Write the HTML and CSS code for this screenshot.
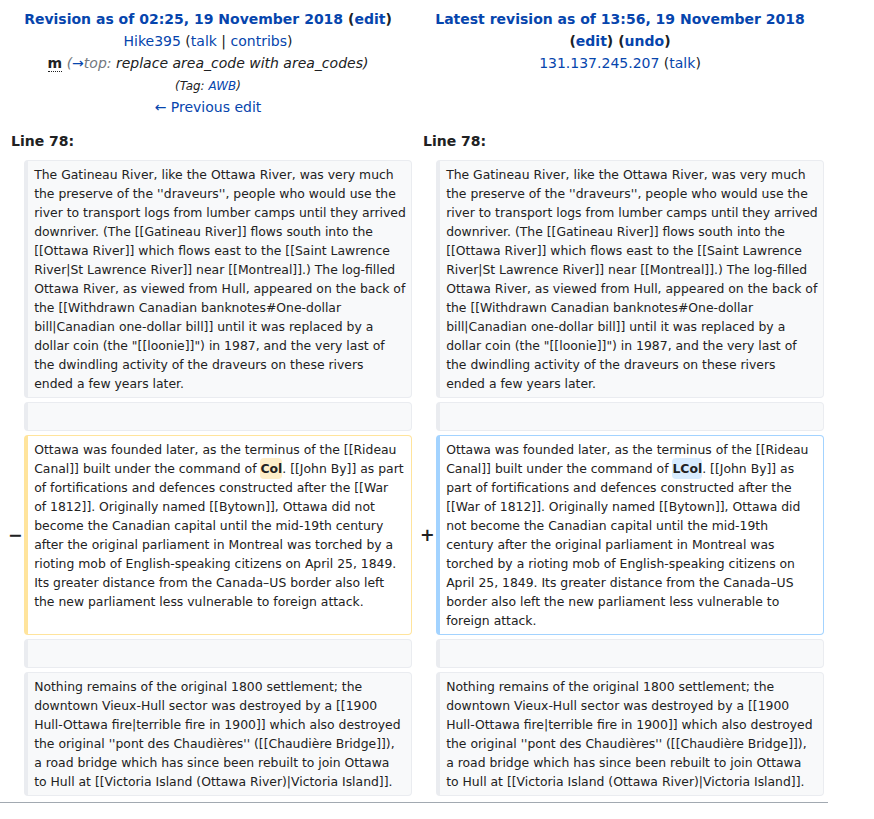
FILE: index.html
```html
<!DOCTYPE html>
<html lang="en">
<head>
<meta charset="utf-8">
<title>Diff</title>
<link rel="stylesheet" href="styles.css">
</head>
<body>
<div class="page">
<table class="diff">
  <colgroup>
    <col class="col-marker">
    <col class="col-content">
    <col class="col-marker">
    <col class="col-content">
  </colgroup>
  <tbody>
    <tr class="title-row">
      <td colspan="2" class="diff-otitle">
        <div><strong><a href="#" class="link">Revision as of 02:25, 19 November 2018</a> <span class="plain">(<a href="#" class="link">edit</a>)</span></strong></div>
        <div><a href="#" class="link">Hike395</a> <span class="plain">(<a href="#" class="link">talk</a> | <a href="#" class="link">contribs</a>)</span></div>
        <div><abbr class="minor" title="This is a minor edit">m</abbr> <span class="comment"><span class="autocomment">(</span><a href="#" class="link">→</a><span class="autocomment">top:</span> replace area_code with area_codes)</span></div>
        <div class="tags">(Tag: <a href="#" class="link">AWB</a>)</div>
        <div><a href="#" class="link">← Previous edit</a></div>
      </td>
      <td colspan="2" class="diff-ntitle">
        <div><strong><a href="#" class="link">Latest revision as of 13:56, 19 November 2018</a> <span class="plain">(<a href="#" class="link">edit</a>)</span> <span class="plain">(<a href="#" class="link">undo</a>)</span></strong></div>
        <div><a href="#" class="link">131.137.245.207</a> <span class="plain">(<a href="#" class="link">talk</a>)</span></div>
      </td>
    </tr>
    <tr>
      <td colspan="2" class="diff-lineno">Line 78:</td>
      <td colspan="2" class="diff-lineno">Line 78:</td>
    </tr>
    <tr>
      <td class="diff-marker"></td>
      <td class="diff-context">The Gatineau River, like the Ottawa River, was very much<br>the preserve of the ''draveurs'', people who would use the<br>river to transport logs from lumber camps until they arrived<br>downriver. (The [[Gatineau River]] flows south into the<br>[[Ottawa River]] which flows east to the [[Saint Lawrence<br>River|St Lawrence River]] near [[Montreal]].) The log-filled<br>Ottawa River, as viewed from Hull, appeared on the back of<br>the [[Withdrawn Canadian banknotes#One-dollar<br>bill|Canadian one-dollar bill]] until it was replaced by a<br>dollar coin (the "[[loonie]]") in 1987, and the very last of<br>the dwindling activity of the draveurs on these rivers<br>ended a few years later.</td>
      <td class="diff-marker"></td>
      <td class="diff-context">The Gatineau River, like the Ottawa River, was very much<br>the preserve of the ''draveurs'', people who would use the<br>river to transport logs from lumber camps until they arrived<br>downriver. (The [[Gatineau River]] flows south into the<br>[[Ottawa River]] which flows east to the [[Saint Lawrence<br>River|St Lawrence River]] near [[Montreal]].) The log-filled<br>Ottawa River, as viewed from Hull, appeared on the back of<br>the [[Withdrawn Canadian banknotes#One-dollar<br>bill|Canadian one-dollar bill]] until it was replaced by a<br>dollar coin (the "[[loonie]]") in 1987, and the very last of<br>the dwindling activity of the draveurs on these rivers<br>ended a few years later.</td>
    </tr>
    <tr>
      <td class="diff-marker"></td>
      <td class="diff-context"><br></td>
      <td class="diff-marker"></td>
      <td class="diff-context"><br></td>
    </tr>
    <tr>
      <td class="diff-marker">−</td>
      <td class="diff-deletedline">Ottawa was founded later, as the terminus of the [[Rideau<br>Canal]] built under the command of <del class="diffchange">Col</del>. [[John By]] as part<br>of fortifications and defences constructed after the [[War<br>of 1812]]. Originally named [[Bytown]], Ottawa did not<br>become the Canadian capital until the mid-19th century<br>after the original parliament in Montreal was torched by a<br>rioting mob of English-speaking citizens on April 25, 1849.<br>Its greater distance from the Canada–US border also left<br>the new parliament less vulnerable to foreign attack.</td>
      <td class="diff-marker">+</td>
      <td class="diff-addedline">Ottawa was founded later, as the terminus of the [[Rideau<br>Canal]] built under the command of <ins class="diffchange">LCol</ins>. [[John By]] as<br>part of fortifications and defences constructed after the<br>[[War of 1812]]. Originally named [[Bytown]], Ottawa did<br>not become the Canadian capital until the mid-19th<br>century after the original parliament in Montreal was<br>torched by a rioting mob of English-speaking citizens on<br>April 25, 1849. Its greater distance from the Canada–US<br>border also left the new parliament less vulnerable to<br>foreign attack.</td>
    </tr>
    <tr>
      <td class="diff-marker"></td>
      <td class="diff-context"><br></td>
      <td class="diff-marker"></td>
      <td class="diff-context"><br></td>
    </tr>
    <tr>
      <td class="diff-marker"></td>
      <td class="diff-context">Nothing remains of the original 1800 settlement; the<br>downtown Vieux-Hull sector was destroyed by a [[1900<br>Hull-Ottawa fire|terrible fire in 1900]] which also destroyed<br>the original ''pont des Chaudières'' ([[Chaudière Bridge]]),<br>a road bridge which has since been rebuilt to join Ottawa<br>to Hull at [[Victoria Island (Ottawa River)|Victoria Island]].</td>
      <td class="diff-marker"></td>
      <td class="diff-context">Nothing remains of the original 1800 settlement; the<br>downtown Vieux-Hull sector was destroyed by a [[1900<br>Hull-Ottawa fire|terrible fire in 1900]] which also destroyed<br>the original ''pont des Chaudières'' ([[Chaudière Bridge]]),<br>a road bridge which has since been rebuilt to join Ottawa<br>to Hull at [[Victoria Island (Ottawa River)|Victoria Island]].</td>
    </tr>
  </tbody>
</table>
<div class="diff-hr"></div>
</div>
</body>
</html>
```
FILE: styles.css
```css
html, body {
  margin: 0;
  padding: 0;
  background: #ffffff;
}
body {
  font-family: "DejaVu Sans", sans-serif;
  font-size: 14px;
  line-height: 22px;
  color: #202122;
}
.page {
  width: 828px;
}
.diff {
  border: 0;
  border-spacing: 4px;
  margin: 0;
  width: 100%;
  table-layout: fixed;
}
.col-marker {
  width: 2%;
}
.col-content {
  width: 48%;
}
.diff td {
  padding: 4px 7px;
}
.diff-otitle,
.diff-ntitle {
  text-align: center;
  vertical-align: top;
}
.link {
  color: #0645ad;
  text-decoration: none;
}
.plain {
  color: #202122;
}
.minor {
  font-weight: bold;
  text-decoration: none;
  border-bottom: 1px dotted #202122;
  cursor: help;
}
.comment {
  font-style: italic;
  color: #202122;
}
.autocomment {
  color: #72777d;
}
.tags {
  font-style: italic;
  font-size: 11.9px;
  line-height: 22px;
  padding-top: 1px;
  margin-bottom: -1px;
}
.diff td.diff-lineno {
  font-weight: bold;
  color: #202122;
  padding: 4px 7px 4px;
}
.diff td.diff-marker {
  text-align: right;
  font-weight: bold;
  font-size: 17.5px;
  line-height: 1.2;
  padding: 4px;
  color: #202122;
}
.diff td.diff-context,
.diff td.diff-addedline,
.diff td.diff-deletedline {
  font-size: 12.4px;
  line-height: 19px;
  vertical-align: top;
  white-space: nowrap;
  overflow: hidden;
  border-style: solid;
  border-width: 1px 1px 1px 4px;
  border-radius: 4px;
  padding: 4px 0 4px 6px;
  color: #222222;
}
.diff-context {
  background: #f8f9fa;
  border-color: #eaecf0;
}
.diff-addedline {
  border-color: #a3d3ff;
  background: #ffffff;
}
.diff-deletedline {
  border-color: #ffe49c;
  background: #ffffff;
}
.diffchange {
  font-weight: bold;
  text-decoration: none;
  border-radius: 4px;
  padding: 3px 0;
}
.diff-addedline .diffchange {
  background: #d8ecff;
}
.diff-deletedline .diffchange {
  background: #feeec8;
}
.diff-hr {
  height: 1px;
  background: #a2a9b1;
  margin-top: 2px;
}
```
